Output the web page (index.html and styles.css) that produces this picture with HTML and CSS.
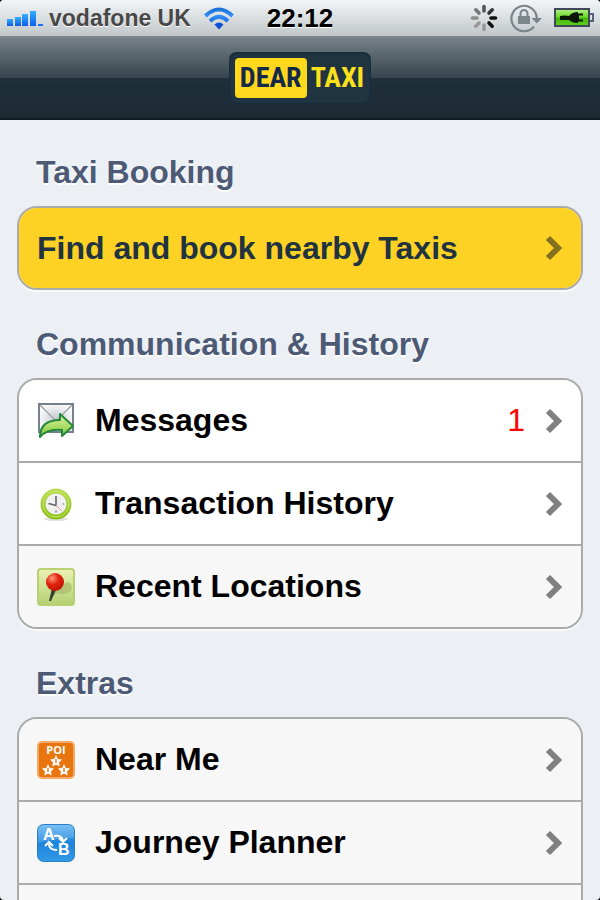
FILE: index.html
```html
<!DOCTYPE html>
<html lang="en">
<head>
    <meta charset="UTF-8">
    <meta name="viewport" content="width=device-width, initial-scale=1.0">
    <title>Dear Taxi</title>
    <link rel="stylesheet" href="styles.css">
</head>
<body>
    <!-- Shared shapes -->
    <svg class="defs" width="0" height="0" aria-hidden="true">
        <defs>
            <linearGradient id="signal" x1="0" y1="0" x2="0" y2="1">
                <stop offset="0" stop-color="#35adff"/>
                <stop offset="1" stop-color="#0b5ee6"/>
            </linearGradient>
            <linearGradient id="wifi" gradientUnits="userSpaceOnUse" x1="0" y1="0" x2="0" y2="22">
                <stop offset="0" stop-color="#1768d2"/>
                <stop offset="0.4" stop-color="#2f8ff2"/>
                <stop offset="1" stop-color="#0a4bd0"/>
            </linearGradient>
            <linearGradient id="charge" x1="0" y1="0" x2="0" y2="1">
                <stop offset="0" stop-color="#b4ee86"/>
                <stop offset="0.45" stop-color="#6fda2c"/>
                <stop offset="0.55" stop-color="#43b50c"/>
                <stop offset="1" stop-color="#5fd21d"/>
            </linearGradient>
            <radialGradient id="paper">
                <stop offset="0" stop-color="#c9ccd1"/>
                <stop offset="1" stop-color="#f8f8f9"/>
            </radialGradient>
            <linearGradient id="arrow" x1="0" y1="0" x2="0" y2="1">
                <stop offset="0" stop-color="#e2f5a8"/>
                <stop offset="1" stop-color="#7cc62f"/>
            </linearGradient>
            <linearGradient id="ring" x1="0" y1="0" x2="0" y2="1">
                <stop offset="0" stop-color="#b9dc4e"/>
                <stop offset="1" stop-color="#8cbd1c"/>
            </linearGradient>
            <linearGradient id="map" x1="0" y1="0" x2="0" y2="1">
                <stop offset="0" stop-color="#eaf1b4"/>
                <stop offset="1" stop-color="#b5d073"/>
            </linearGradient>
            <radialGradient id="pin" cx="0.35" cy="0.3" r="0.7">
                <stop offset="0" stop-color="#ff9a7c"/>
                <stop offset="0.5" stop-color="#e3240c"/>
                <stop offset="1" stop-color="#c51504"/>
            </radialGradient>
            <linearGradient id="route" x1="0" y1="0" x2="0" y2="1">
                <stop offset="0" stop-color="#62b5f2"/>
                <stop offset="0.5" stop-color="#1c84dc"/>
                <stop offset="1" stop-color="#3399e8"/>
            </linearGradient>
            <symbol id="chevron" viewBox="0 0 18 26">
                <path d="M3 3L13 13L3 23" fill="none" stroke="currentColor" stroke-width="6"/>
            </symbol>
            <symbol id="star" viewBox="0 0 12 12">
                <path d="M6 0L7.800 3.900L12 4.400L9 7.400L9.700 11.600L6 9.600L2.300 11.600L3 7.400L0 4.400L4.200 3.900Z" fill="#fff"/>
            </symbol>
        </defs>
    </svg>

    <div class="screen">
        <!-- Status bar -->
        <div class="status">
            <div class="status-left">
                <svg width="37" height="17" viewBox="0 0 37 17" aria-label="Signal">
                    <g fill="url(#signal)">
                        <rect x="1" y="9" width="6" height="7"/>
                        <rect x="9" y="7" width="6" height="9"/>
                        <rect x="16" y="4" width="6" height="12"/>
                        <rect x="24" y="1" width="6" height="15"/>
                    </g>
                    <rect x="32" y="14" width="5" height="2" fill="#1b6ff0"/>
                </svg>
                <span class="carrier">vodafone UK</span>
                <svg width="30" height="23" viewBox="0 0 30 23" aria-label="Wi-Fi">
                    <g fill="none" stroke="url(#wifi)" stroke-width="4">
                        <path d="M1.500 9Q15 -4 28.500 9"/>
                        <path d="M6 14Q15 5.500 24 14"/>
                    </g>
                    <path d="M10.500 17.500Q15 13.500 19.500 17.500L15 22.500Z" fill="#0d50d2"/>
                </svg>
            </div>
            <span class="clock">22:12</span>
            <div class="status-right">
                <svg width="28" height="28" viewBox="-14 -14 28 28" aria-label="Loading">
                    <g stroke-width="3.600" stroke-linecap="round">
                        <path d="M0 -7V-11.500" stroke="#555"/>
                        <path d="M5 -5L8.200 -8.200" stroke="#333"/>
                        <path d="M7 0H11.500" stroke="#111"/>
                        <path d="M5 5L8.200 8.200" stroke="#111"/>
                        <path d="M0 7V11.500" stroke="#999"/>
                        <path d="M-5 5L-8.200 8.200" stroke="#999"/>
                        <path d="M-7 0H-11.500" stroke="#8c8c8c"/>
                        <path d="M-5 -5L-8.200 -8.200" stroke="#777"/>
                    </g>
                </svg>
                <svg width="32" height="30" viewBox="0 0 32 30" aria-label="Rotation lock">
                    <path d="M24 23.500A12.700 12.700 0 1 1 26.800 15" fill="none" stroke="#7c8587" stroke-width="2.200"/>
                    <path d="M21.500 15H32L26.800 20.500Z" fill="#7c8587"/>
                    <rect x="8" y="13" width="12" height="8" fill="#7c8587"/>
                    <path d="M10.500 13V10.500A3.500 3.500 0 0 1 17.500 10.500V13" fill="none" stroke="#7c8587" stroke-width="2"/>
                </svg>
                <svg width="40" height="20" viewBox="0 0 40 20" aria-label="Battery charging">
                    <rect x="1" y="1" width="34" height="17" fill="url(#charge)" stroke="#41485a" stroke-width="2"/>
                    <path d="M36 6H39V13H36" fill="none" stroke="#596172" stroke-width="2"/>
                    <path d="M6 8Q11 7 15 8Q18 4 24 4V5.500H29V7.500H25V11.500H29V13.500H24V15Q18 15 15 12Q11 12 6 12Z" fill="#0b1506"/>
                </svg>
            </div>
        </div>

        <!-- Title bar -->
        <header class="navbar">
            <div class="logo">
                <span class="logo-dear">DEAR</span>
                <span class="logo-taxi">TAXI</span>
            </div>
        </header>

        <main class="content">
            <h2>Taxi Booking</h2>
            <ul class="list">
                <li>
                    <a class="row row-booking" href="#booking">
                        <span class="label">Find and book nearby Taxis</span>
                        <svg class="arrow arrow-dark" width="18" height="26"><use href="#chevron"/></svg>
                    </a>
                </li>
            </ul>

            <h2>Communication &amp; History</h2>
            <ul class="list">
                <li>
                    <a class="row row-white" href="#messages">
                        <svg class="icon" width="38" height="38" viewBox="0 0 38 38">
                            <rect x="2" y="2" width="34" height="28" fill="url(#paper)" stroke="#77818e" stroke-width="2"/>
                            <path d="M3 29L15 16M35 29L23 16" stroke="#d3d6da" fill="none"/>
                            <path d="M3 3L19 19L35 3" fill="none" stroke="#a2a6ac" stroke-width="1.500"/>
                            <path d="M3 35C3 23 11 18 23 18V12L36 24L25 34V28C15 27 8 29 3 35Z" fill="url(#arrow)" stroke="#22883c" stroke-width="2" stroke-linejoin="round"/>
                        </svg>
                        <span class="label">Messages</span>
                        <span class="count">1</span>
                        <svg class="arrow" width="18" height="26"><use href="#chevron"/></svg>
                    </a>
                </li>
                <li>
                    <a class="row row-white" href="#history">
                        <svg class="icon" width="38" height="38" viewBox="0 0 38 38">
                            <ellipse cx="19" cy="34" rx="12" ry="2" fill="#e3e3e3"/>
                            <circle cx="19" cy="19" r="13" fill="#f1f1f3" stroke="url(#ring)" stroke-width="5"/>
                            <circle cx="19" cy="19" r="13" fill="none" stroke="#cbe86c"/>
                            <path d="M19 11V20.500L11.500 18.500" fill="none" stroke="#666" stroke-width="1.600"/>
                            <path d="M19 20L25 26" stroke="#f29c92"/>
                            <g fill="#aaa">
                                <circle cx="26.500" cy="19" r="1"/>
                                <circle cx="19" cy="26.500" r="1.200"/>
                            </g>
                        </svg>
                        <span class="label">Transaction History</span>
                        <svg class="arrow" width="18" height="26"><use href="#chevron"/></svg>
                    </a>
                </li>
                <li>
                    <a class="row" href="#locations">
                        <svg class="icon" width="38" height="38" viewBox="0 0 38 38">
                            <rect x="1" y="1" width="36" height="36" rx="3" fill="url(#map)" stroke="#b8cf72" stroke-width="2"/>
                            <path d="M14 30Q19 20 30 14Q37 16 34 23Q28 28 20 25Z" fill="#9db562" opacity="0.600"/>
                            <path d="M15 20L19 22L14 33H12Z" fill="#3a3d34"/>
                            <circle cx="18" cy="14" r="9" fill="url(#pin)"/>
                        </svg>
                        <span class="label">Recent Locations</span>
                        <svg class="arrow" width="18" height="26"><use href="#chevron"/></svg>
                    </a>
                </li>
            </ul>

            <h2>Extras</h2>
            <ul class="list">
                <li>
                    <a class="row" href="#near-me">
                        <svg class="icon" width="38" height="38" viewBox="0 0 38 38">
                            <rect x="1" y="1" width="36" height="36" rx="4" fill="#e9750e" stroke="#f3a967" stroke-width="2"/>
                            <text class="poi" x="19" y="13" text-anchor="middle">POI</text>
                            <use href="#star" x="13" y="14" width="12" height="12"/>
                            <use href="#star" x="5" y="23" width="12" height="12"/>
                            <use href="#star" x="21" y="23" width="12" height="12"/>
                            <g fill="#f0a05a">
                                <rect x="18" y="18" width="2" height="4"/>
                                <rect x="10" y="27" width="2" height="4"/>
                                <rect x="26" y="27" width="2" height="4"/>
                            </g>
                        </svg>
                        <span class="label">Near Me</span>
                        <svg class="arrow" width="18" height="26"><use href="#chevron"/></svg>
                    </a>
                </li>
                <li>
                    <a class="row" href="#journey">
                        <svg class="icon" width="38" height="38" viewBox="0 0 38 38">
                            <rect x="0.500" y="0.500" width="37" height="37" rx="6" fill="url(#route)" stroke="#2a7fc4"/>
                            <path d="M1 19V7Q1 1 7 1H31Q37 1 37 7V14Q20 14 1 19Z" fill="#fff" opacity="0.150"/>
                            <g class="route-text">
                                <text x="6" y="16">A</text>
                                <text x="21" y="31">B</text>
                            </g>
                            <g fill="none" stroke="#fff" stroke-width="2">
                                <path d="M17 12Q25 11 26 17M22 14L26 18L30 14"/>
                                <path d="M20 26Q12 26 12 20M8 22L12 18L16 22"/>
                            </g>
                        </svg>
                        <span class="label">Journey Planner</span>
                        <svg class="arrow" width="18" height="26"><use href="#chevron"/></svg>
                    </a>
                </li>
                <li><div class="row"></div></li>
            </ul>
        </main>
    </div>
</body>
</html>
```

FILE: styles.css
```css
* {
    box-sizing: border-box;
}

body {
    margin: 0;
    background-color: #000;
    font-family: "Liberation Sans", Arial, Helvetica, sans-serif;
}

.defs {
    display: block;
}

.screen {
    display: flex;
    flex-direction: column;
    height: 100vh;
    overflow: hidden;
    border-radius: 4px;
    background-color: #ecf0f4;
}

/* Status bar */
.status {
    display: grid;
    grid-template-columns: 1fr auto 1fr;
    align-items: center;
    flex: none;
    height: 38px;
    padding: 0 6px;
    border-bottom: 2px solid #7e8588;
    background: linear-gradient(#f2f6f8, #c1c6c9);
    font-weight: bold;
    text-shadow: 0 1px 0 #fff;
}

.status-left,
.status-right {
    display: flex;
    align-items: center;
}

.status-left {
    gap: 6px;
}

.status-right {
    justify-content: flex-end;
    gap: 12px;
}

.carrier {
    margin-right: 7px;
    color: #484848;
    font-size: 23px;
    white-space: nowrap;
}

.clock {
    color: #000;
    font-size: 26px;
}

/* Title bar */
.navbar {
    display: flex;
    justify-content: center;
    align-items: center;
    flex: none;
    height: 82px;
    border-bottom: 2px solid #101b22;
    background: linear-gradient(#768187, #35444d 50%, #1f303b 50%, #1d2a33);
}

.logo {
    display: flex;
    align-items: center;
    gap: 4px;
    height: 52px;
    padding: 0 7px 0 6px;
    border-radius: 8px;
    background-color: #1f3340;
    box-shadow: inset 0 0 2px #0c1e35;
    font-family: "Roboto Condensed", "Liberation Sans Narrow", "DejaVu Sans Condensed", sans-serif;
    font-size: 28px;
    font-weight: bold;
}

.logo-dear {
    padding: 0 5px;
    border-radius: 4px;
    background-color: #fdd81c;
    color: #14284a;
    line-height: 40px;
}

.logo-taxi {
    color: #fde01c;
    line-height: 40px;
}

/* Lists */
.content {
    flex: 1;
    min-height: 0;
    padding: 0 17px;
}

h2 {
    margin: 34px 0 16px;
    padding-left: 19px;
    color: #4d5a75;
    font-size: 32px;
    line-height: 36px;
    text-shadow: 0 2px 0 #fff;
}

.list {
    margin: 0 0 36px;
    padding: 0;
    overflow: hidden;
    border: 2px solid #aaa;
    border-radius: 20px;
    box-shadow: 0 2px 0 #f8fafb;
    list-style: none;
}

.list li + li {
    border-top: 2px solid #aaa;
}

.row {
    display: flex;
    align-items: center;
    gap: 20px;
    height: 81px;
    padding: 0 18px;
    background-color: #f7f7f7;
    color: #000;
    font-size: 32px;
    font-weight: bold;
    text-decoration: none;
}

.row-white {
    background-color: #fff;
}

.row-booking {
    height: 80px;
    background-color: #fdd225;
    color: #1f3340;
}

.icon,
.arrow {
    flex: none;
}

.arrow {
    color: #808080;
}

.arrow-dark {
    color: #84701f;
}

.label {
    flex: 1;
}

.count {
    color: #f00;
    font-weight: normal;
}

.poi {
    fill: #fff;
    font-family: "Open Sans", sans-serif;
    font-size: 11px;
}

.route-text {
    fill: #fff;
    font-size: 16px;
}
```
